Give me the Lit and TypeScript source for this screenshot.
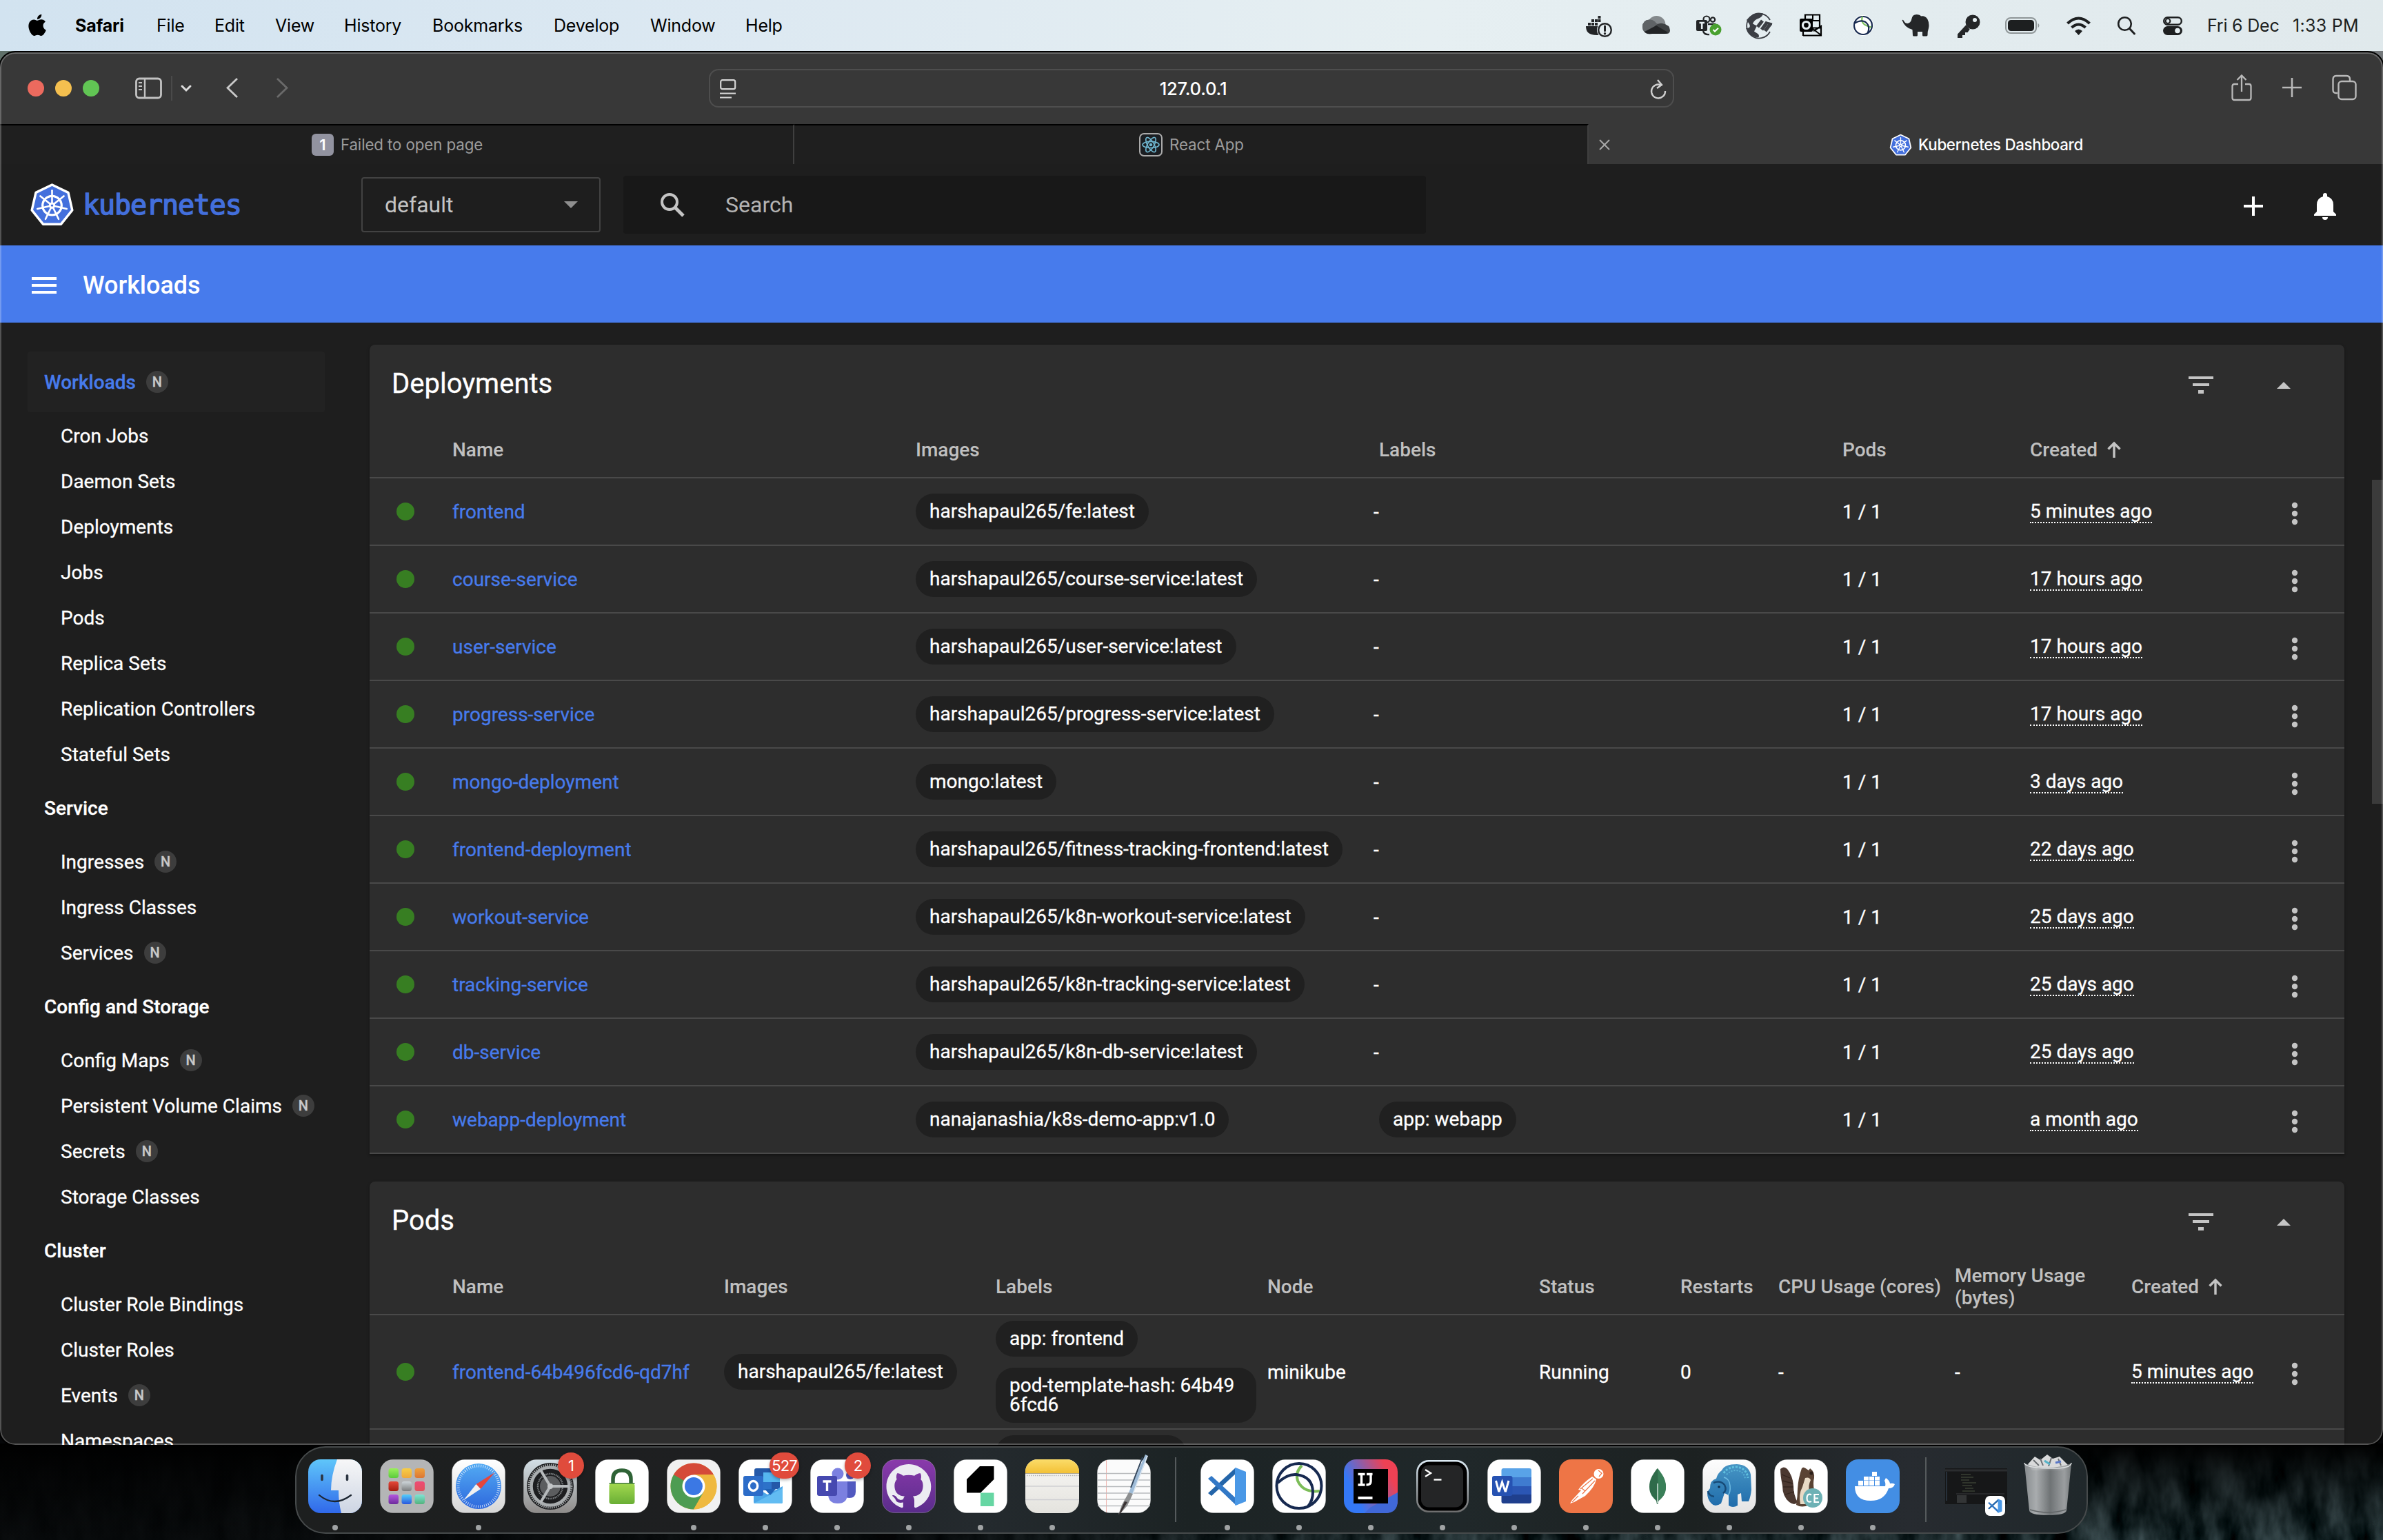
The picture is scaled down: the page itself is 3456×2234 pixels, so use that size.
import { LitElement, html, svg, css, nothing } from "lit";
import { customElement } from "lit/decorators.js";

const frame = (w: number, h: number, body: unknown, cls = "") =>
  html`<svg class=${cls} width=${w} height=${h} viewBox="0 0 ${w} ${h}" fill="none">${body}</svg>`;

/* ---------- Kubernetes helm ---------- */
const polar = (r: number, deg: number) => {
  const a = (deg * Math.PI) / 180;
  return `${(32 + r * Math.cos(a)).toFixed(2)},${(32.6 + r * Math.sin(a)).toFixed(2)}`;
};
const sides = [0, 1, 2, 3, 4, 5, 6].map((i) => -90 + (i * 360) / 7);
const helm = (size: number) => html`<svg width=${size} height=${size} viewBox="0 0 64 64" fill="none">
  <polygon points=${sides.map((d) => polar(29.6, d)).join(" ")} fill="#436fdc" stroke="#fff" stroke-width="3.4" stroke-linejoin="round" />
  <circle cx="32" cy="32.6" r="13.6" stroke="#fff" stroke-width="3.2" />
  ${sides.map((d) => svg`<polyline points="${polar(4, d)} ${polar(21.5, d)}" stroke="#fff" stroke-width="2.6" stroke-linecap="round" />`)}
  <circle cx="32" cy="32.6" r="4.6" fill="#fff" /><circle cx="32" cy="32.6" r="1.7" fill="#436fdc" />
</svg>`;

/* ---------- Menu bar ---------- */
const apple = html`<svg class="apple" width="27" height="32" viewBox="4 1.5 16.5 20.5"><path fill="#000" d="M18.71 19.5c-.83 1.24-1.71 2.45-3.05 2.47-1.34.03-1.77-.79-3.29-.79-1.53 0-2 .77-3.27.82-1.31.05-2.3-1.32-3.14-2.53C4.25 17 2.94 12.45 4.7 9.39c.87-1.52 2.43-2.48 4.12-2.51 1.28-.02 2.5.87 3.29.87.78 0 2.26-1.07 3.81-.91.65.03 2.47.26 3.64 1.98-.09.06-2.17 1.28-2.15 3.81.03 3.02 2.65 4.03 2.68 4.04-.03.07-.42 1.44-1.38 2.83M13 3.5c.73-.83 1.94-1.46 2.94-1.5.13 1.17-.34 2.35-1.04 3.19-.69.85-1.83 1.51-2.95 1.42-.15-1.15.41-2.35 1.05-3.11z"/></svg>`;

const statusIcons = [
  frame(40, 54, svg`<path d="M0 28h26v12q-4 1-10 1C4 41 0 36 0 28z" fill="#222426"/><g fill="#222426"><rect x="3" y="23" width="4" height="4"/><rect x="8" y="23" width="4" height="4"/><rect x="13" y="23" width="4" height="4"/><rect x="8" y="18" width="4" height="4"/><rect x="13" y="18" width="4" height="4"/><rect x="17.500" y="18" width="4" height="4"/><rect x="17.500" y="13" width="4" height="4"/></g><circle cx="27.500" cy="33.500" r="11.500" fill="#e5eef1"/><circle cx="27.500" cy="33.500" r="9.300" stroke="#222426" stroke-width="2.400"/><path d="M27.500 28v6.500" stroke="#222426" stroke-width="3" stroke-linecap="round"/><circle cx="27.500" cy="38.800" r="1.700" fill="#222426"/>`),
  frame(40, 54, svg`<circle cx="20.500" cy="26" r="13" fill="#84898c"/><circle cx="10.500" cy="29" r="10.500" fill="#62666a"/><path d="M10 18.500q6 0 10 5l8 4.500-20 11q-8-2-8-10 0-10 10-10.500z" fill="#5f6366"/><path d="M19 27q5-4 10-3 11 2 11 10 0 5-5 5H10z" fill="#3e4143"/><path d="M3 36l17-9 17 10q-2 2-5 2H10q-5 0-7-3z" fill="#222426"/>`),
  frame(40, 54, svg`<circle cx="15" cy="18" r="4.500" stroke="#222426" stroke-width="2.200"/><circle cx="24" cy="18.500" r="3.200" stroke="#222426" stroke-width="2.200"/><path d="M17 25h10v8M10 35q2 6 9 5" stroke="#222426" stroke-width="2.400"/><rect x="0" y="19" width="16" height="16" rx="2" fill="#222426"/><path d="M4.500 23h7.500M8.200 23v9" stroke="#e5eef1" stroke-width="2.600"/><circle cx="28" cy="33" r="8.500" fill="#48a02f"/><path d="M24.500 33l2.500 2.500 5-4.800" stroke="#fff" stroke-width="2"/>`),
  frame(44, 54, svg`<path d="M37 19A18 18 0 1 0 37 36" stroke="#3b3e44" stroke-width="1.800"/><path d="M3 19Q12 7 27 9.500q-1 5-6 7-7 2-9 8l6 3-4 8 6 4q2 3 0 5Q8 44 2 31q8 0 5-6-2-3-4-6z" fill="#3b3e44"/><path d="M19 29l7-9M25 33l8-11M30 35l8-11" stroke="#3b3e44" stroke-width="5"/><path d="M32 23l8 2" stroke="#3b3e44" stroke-width="3"/>`),
  frame(34, 54, svg`<path d="M8 11.500h21v19H8zM5 42V30M5 41.500h26V28l-11 7" stroke="#000" stroke-width="2.200"/><path d="M8 20h21M19 12v8M18 31l13 10" stroke="#000" stroke-width="2"/><rect x="0" y="17" width="19" height="19" rx="2" fill="#000"/><circle cx="9.500" cy="26.500" r="5" stroke="#e5eef1" stroke-width="3.200"/>`),
  frame(32, 54, svg`<circle cx="15" cy="27" r="15" fill="#fff"/><circle cx="15" cy="27" r="13" stroke="#172a50" stroke-width="2.200"/><path d="M14 14q-4 12 13 15.500" stroke="#7cc05a" stroke-width="2.200"/><path d="M2 24q14-8 20 2 3 6-1 13" stroke="#172a50" stroke-width="2.200"/>`),
  frame(42, 54, svg`<path d="M.5 19q1.500-1 3 2 1.500 3 5 3 5-1 6-7 1-6 7-6 5 0 6.500 2.500 6-1 9.500 4.500 3 6 1.500 13-1.500 4-1.500 10 0 1.500-2 1.500h-4q-1.500 0-1.500-1.500V36h-7v5q0 1.500-1.500 1.500h-4q-1.500 0-1.500-1.500l-.5-8Q4 30 .5 19z" fill="#242628"/>`),
  frame(34, 54, svg`<path d="M14 27L2 40v4h5v-4h4v-4h4l3-4" fill="#242628" stroke="#242628" stroke-width="2"/><circle cx="23" cy="22" r="10.500" fill="#242628"/><circle cx="26" cy="19" r="3" fill="#e5eef1"/>`),
  frame(54, 54, svg`<rect x="1" y="16" width="44" height="22" rx="7" stroke="#8f9698" stroke-width="2"/><rect x="4" y="19" width="38" height="16" rx="4.500" fill="#1d1f20"/><path d="M47.500 23.500q4 3.500 0 7z" fill="#8f9698"/>`),
  frame(36, 54, svg`<g stroke="#1d1f20" stroke-width="4"><path d="M1.500 24q16-15 32 0"/><path d="M7.500 30q10-9 20 0"/></g><path d="M12 35q5.500-5 11 0l-5.500 6z" fill="#1d1f20"/>`),
  frame(28, 54, svg`<circle cx="10.500" cy="24.500" r="9.300" stroke="#1d1f20" stroke-width="2.600"/><path d="M17.500 31.500l7 7.500" stroke="#1d1f20" stroke-width="3" stroke-linecap="round"/>`),
  frame(30, 54, svg`<rect x="1.200" y="15.200" width="25.600" height="10.600" rx="5.300" stroke="#1d1f20" stroke-width="2.400"/><circle cx="7" cy="20.500" r="3.400" stroke="#1d1f20" stroke-width="2"/><rect x="0" y="28" width="28" height="13" rx="6.500" fill="#1d1f20"/><circle cx="21" cy="34.500" r="3.800" fill="#e5eef1"/>`),
];

const menus = ["Safari", "File", "Edit", "View", "History", "Bookmarks", "Develop", "Window", "Help"];

/* ---------- Data ---------- */
const nav: [string, [string, boolean][]][] = [
  ["Workloads", [["Cron Jobs", false], ["Daemon Sets", false], ["Deployments", false], ["Jobs", false], ["Pods", false], ["Replica Sets", false], ["Replication Controllers", false], ["Stateful Sets", false]]],
  ["Service", [["Ingresses", true], ["Ingress Classes", false], ["Services", true]]],
  ["Config and Storage", [["Config Maps", true], ["Persistent Volume Claims", true], ["Secrets", true], ["Storage Classes", false]]],
  ["Cluster", [["Cluster Role Bindings", false], ["Cluster Roles", false], ["Events", true], ["Namespaces", false]]],
];

const deployments: [string, string, string, string][] = [
  ["frontend", "harshapaul265/fe:latest", "", "5 minutes ago"],
  ["course-service", "harshapaul265/course-service:latest", "", "17 hours ago"],
  ["user-service", "harshapaul265/user-service:latest", "", "17 hours ago"],
  ["progress-service", "harshapaul265/progress-service:latest", "", "17 hours ago"],
  ["mongo-deployment", "mongo:latest", "", "3 days ago"],
  ["frontend-deployment", "harshapaul265/fitness-tracking-frontend:latest", "", "22 days ago"],
  ["workout-service", "harshapaul265/k8n-workout-service:latest", "", "25 days ago"],
  ["tracking-service", "harshapaul265/k8n-tracking-service:latest", "", "25 days ago"],
  ["db-service", "harshapaul265/k8n-db-service:latest", "", "25 days ago"],
  ["webapp-deployment", "nanajanashia/k8s-demo-app:v1.0", "app: webapp", "a month ago"],
];

/* ---------- Dock artwork, each on a 78 × 78 tile ---------- */
const tile = (fill: string) => svg`<rect x="0.500" y="0.500" width="77" height="77" rx="18" fill=${fill} stroke="#fff" stroke-opacity=".25"/>`;
const grad = (id: string, a: string, b: string) => svg`<linearGradient id=${id} x1="0" y1="0" x2="0" y2="1"><stop stop-color=${a}/><stop offset="1" stop-color=${b}/></linearGradient>`;
const launch = [["#9cf05c", "#5bcb3c"], ["#f7ce46", "#eea93a"], ["#eea23c", "#dc7634"], ["#e5483a", "#a31d12"], ["#ced6da", "#7b7d7e"], ["#ee4a76", "#e0525b"], ["#b459e0", "#6d2b9c"], ["#56d0fb", "#2a56dd"], ["#7fe4d6", "#53b27c"]];

const finder = svg`${grad("fi", "#5fc6fa", "#3068ea")}${grad("fw", "#f7f7f8", "#cdd5e3")}<clipPath id="fc"><rect width="78" height="78" rx="18"/></clipPath><g clip-path="url(#fc)"><rect width="78" height="78" fill="url(#fi)"/><path d="M42 0Q33 24 33 45h11q0 18 4 33h30V0z" fill="url(#fw)"/><path d="M20 23.500v6M56.500 23.500v6" stroke="#2b3440" stroke-width="3.600" stroke-linecap="round"/><path d="M16 52q22 18 46 0" stroke="#1b2530" stroke-width="2.200" stroke-linecap="round"/></g>`;
const launchpad = svg`${tile("#b4b5b6")}${launch.map(([a, b], i) => svg`${grad("lp" + i, a, b)}<rect x=${12.5 + (i % 3) * 19} y=${13 + Math.floor(i / 3) * 19} width="14.500" height="14" rx="3.500" fill="url(#lp${i})"/>`)}`;
const safari = svg`${grad("sa", "#ffffff", "#d6d6d6")}${grad("sb", "#52aaf3", "#2e68dd")}${tile("url(#sa)")}<circle cx="39" cy="39" r="33" fill="url(#sb)"/><circle cx="39" cy="39" r="29.500" stroke="#fff" stroke-opacity=".8" stroke-width="4" stroke-dasharray=".9 2.190"/><path d="M62.500 19L42 43l-6.500-7z" fill="#e5463c"/><path d="M17 59.500L35.500 36l6.500 7z" fill="#f1f1f1"/>`;
const settings = svg`${grad("se", "#d3dfe6", "#8f8c8a")}${tile("url(#se)")}<circle cx="39" cy="39" r="34" fill="#1d1e20"/><circle cx="39" cy="39" r="31" stroke="#a2a6a8" stroke-width="3" stroke-dasharray="1.500 1.500"/><circle cx="39" cy="39" r="27.500" stroke="#a9adaf" stroke-width="4.500"/><circle cx="39" cy="39" r="18" stroke="#7d8183" stroke-width="2.500" stroke-dasharray="1.500 1"/><circle cx="39" cy="39" r="15" fill="#5b5d5f"/><path d="M39 39h27M39 39L25 15.500M39 39L25 62.500" stroke="#b6babc" stroke-width="4"/><circle cx="39" cy="39" r="4" fill="#c3c6c8"/>`;
const lock = svg`${grad("lo", "#a3d94f", "#69ae35")}${tile("#fff")}<path d="M26 37V28.500q0-12.500 13-12.500t13 12.500V37" stroke="#2f6336" stroke-width="5.500"/><rect x="20.500" y="34.500" width="37" height="30.500" rx="4" fill="url(#lo)"/><path d="M20.500 35h37" stroke="#417a34" stroke-width="1.500"/>`;
const chrome = svg`${tile("#f1f1f1")}<circle cx="39" cy="39" r="33.500" fill="#e9b63c"/><path d="M10 22.200A33.500 33.500 0 0 1 68 22.200H39L24.500 47.400z" fill="#d54a39"/><path d="M10 22.200A33.500 33.500 0 0 0 39 72.500L53.500 47.400 39 39z" fill="#4d9c52"/><path d="M39 22.200h29A33.500 33.500 0 0 1 39 72.500l14.500-25.100z" fill="#efb93f"/><circle cx="39" cy="39" r="16.500" fill="#fff"/><circle cx="39" cy="39" r="13" fill="#3b78e4"/>`;
const outlook = svg`${tile("#fff")}<rect x="23" y="13" width="37" height="30" rx="3" fill="#2458a8"/><path d="M36 19h24v14H36z" fill="#56b7ef"/><path d="M36 33h12v12H36z" fill="#2d72c9"/><path d="M22 39l20 12 22-12v23q0 2-2 2H24q-2 0-2-2z" fill="#4ba6e8"/><path d="M22 64L64 42v20q0 2-2 2z" fill="#62bcf2"/><path d="M38 43h16l-8 9z" fill="#1f62b5"/><rect x="7" y="24" width="29" height="29" rx="3" fill="#2c6cc8"/><ellipse cx="21.500" cy="38.500" rx="6.200" ry="7" stroke="#fff" stroke-width="3.400"/>`;
const teams = svg`${tile("#fff")}<circle cx="40" cy="21" r="8.500" fill="#7b80e0"/><circle cx="58" cy="23" r="6" fill="#4f55bd"/><path d="M48 32h18v15q0 9-9 9-6 0-9-4z" fill="#5159c0"/><path d="M26 32h28v18q0 14-14 14T26 50z" fill="#7b80e0"/><rect x="10" y="24" width="29" height="29" rx="3" fill="#4649b0"/><path d="M18.500 32h12M24.500 32v14" stroke="#fff" stroke-width="3.400"/>`;
const github = svg`${grad("gh", "#8a3aab", "#5a2c8c")}${tile("url(#gh)")}<g transform="translate(6.500 7) scale(4.050)"><path fill="#ececf2" d="M8 0C3.580 0 0 3.580 0 8c0 3.540 2.290 6.530 5.470 7.590.4.070.55-.17.55-.38 0-.19-.01-.82-.01-1.490-2.010.37-2.530-.49-2.690-.94-.09-.23-.48-.94-.82-1.130-.28-.15-.68-.52-.01-.53.63-.01 1.080.58 1.230.82.72 1.210 1.870.87 2.330.66.07-.52.28-.87.51-1.070-1.780-.2-3.640-.89-3.640-3.950 0-.87.31-1.590.82-2.150-.08-.2-.36-1.020.08-2.120 0 0 .67-.21 2.200.82.64-.18 1.320-.27 2-.27.68 0 1.360.09 2 .27 1.530-1.040 2.200-.82 2.200-.82.44 1.100.16 1.920.08 2.120.51.56.82 1.270.82 2.150 0 3.070-1.870 3.750-3.650 3.950.29.25.54.73.54 1.480 0 1.070-.01 1.930-.01 2.200 0 .21.15.46.55.38A8.013 8.013 0 0016 8c0-4.420-3.580-8-8-8z"/></g>`;
const greenApp = svg`${tile("#fff")}<path d="M38 10h20.500v19L39 48.500H19V29z" fill="#000"/><path d="M39 48.500h19.500V68H39z" fill="#66d6a3"/>`;
const notes = svg`${grad("no", "#fbdc6a", "#f3c136")}${grad("np", "#f8f7f5", "#e4e3de")}<clipPath id="nc"><rect width="78" height="78" rx="18"/></clipPath><g clip-path="url(#nc)"><rect width="78" height="78" fill="url(#np)"/><rect width="78" height="20" fill="url(#no)"/><path d="M0 20.500h78" stroke="#b0a890"/><path d="M2 23.500h76" stroke="#b5b5b2" stroke-width="1.500" stroke-dasharray="1.500 1.500"/><path d="M0 39h78M0 58.500h78" stroke="#cfcfd2" stroke-width="1.300"/></g>`;
const textedit = svg`${tile("#fbfbfb")}<path d="M13.500 1v76" stroke="#f0b5b0"/><path d="M1 20.500h76M1 30h76M1 39.500h76M1 49h76M1 58h76M1 67.500h76" stroke="#b9bcbe" stroke-width="1.300"/><path d="M70 -7l4 2-22 55-6-2z" fill="#9fbcd8"/><path d="M66-3L49 41" stroke="#33465c" stroke-width="2"/><path d="M73-5L52 50" stroke="#dfe9f2" stroke-width="1.500"/><path d="M46 48l6 2-8 17-7 8-6 5 5-14z" fill="#8d8f90" /><path d="M40 61l4 1-9 15-4 4z" fill="#3a3334"/>`;
const vscode = (s = 1) => svg`<g transform="scale(${s})"><path d="M11 49l5 4 36-33-1-8z" fill="#2465a9"/><path d="M11 28l5-4 36 33-1 9z" fill="#3278c6"/><path d="M51 12l15 6v43l-15 6-1-1V13z" fill="#4a98e6"/></g>`;
const vscodeTile = svg`${tile("#fff")}${vscode()}`;
const ringApp = svg`${tile("#fff")}<path d="M43 9q-10 10-6 22 8 18 32 15" stroke="#7cbd58" stroke-width="4"/><circle cx="39" cy="38.500" r="32.500" stroke="#172a50" stroke-width="4"/><path d="M8 34q14-13 27-12 24 3 24 26 0 12-7 20" stroke="#172a50" stroke-width="4"/>`;
const intellij = svg`<linearGradient id="ij" x1="0" y1=".6" x2=".9" y2=".15"><stop offset=".15" stop-color="#3478f6"/><stop offset=".9" stop-color="#ef4154"/></linearGradient><rect width="78" height="78" rx="18" fill="url(#ij)"/><path d="M38 70L78 48v12q0 18-18 18H30z" fill="#4068d8"/><rect x="14" y="14" width="50" height="50" fill="#000"/><path d="M20.500 21.500h10M25.500 21.500v15M20.500 37h10M33 21.500h8.500M39 21v11q0 5-6.500 5" stroke="#fff" stroke-width="3.400"/><path d="M20.500 56h21" stroke="#fff" stroke-width="4"/>`;
const terminal = svg`${grad("te", "#dcebf5", "#6d6d6d")}<rect x="1" y="1" width="76" height="76" rx="18" fill="url(#te)"/><rect x="3.500" y="3.500" width="71" height="71" rx="16" fill="#000"/><rect x="8" y="8.500" width="61" height="61" rx="11" fill="#242526"/><path d="M14 15l8 5-8 5" stroke="#fff" stroke-width="2.400"/><path d="M26.500 29.500h11" stroke="#fff" stroke-width="2.400"/>`;
const word = svg`${tile("#fff")}<clipPath id="wc"><rect x="20.500" y="13" width="43.500" height="51" rx="3"/></clipPath><g clip-path="url(#wc)"><path d="M20 13h44v13H20z" fill="#59a3e8"/><path d="M20 26h44v13H20z" fill="#3f7bd0"/><path d="M20 39h44v12H20z" fill="#2b56b4"/><path d="M20 51h44v13H20z" fill="#1f3f8d"/></g><rect x="7" y="24" width="29.500" height="29" rx="3" fill="#2652b2"/><path d="M12.500 31l4 15h.8L21.500 33l4.400 13h.8L31 31" stroke="#fff" stroke-width="3"/>`;
const postman = svg`<rect width="78" height="78" rx="18" fill="#ee7546"/><circle cx="57.500" cy="21" r="7" fill="#fff"/><path d="M57 16l5 4-4 5" stroke="#ee7546" stroke-width="1.300"/><path d="M48 25l6 4q-2 11-16 24L22 62l-6 2 3-5 13-14-4-1q7-10 20-19z" fill="#fff"/><path d="M49 28L31 43M52 31L34 50M33 42l5 4M28 53l-9 9" stroke="#ee7546" stroke-width="1.200"/>`;
const mongo = svg`${tile("#fff")}<path d="M38.500 13C32 22 27 29 27 40c0 11 6 16 10 20l1 5h1.500l1-5C46 56 51 50 51 40c0-11-6-18-12.500-27z" fill="#2f6b4a"/><path d="M39 13c7 9 12 16 12 27s-6 16-11 20z" fill="#3a7f58"/><path d="M39 35v29" stroke="#c9ddd2" stroke-width="1.600"/>`;
const pgadmin = svg`${grad("pg", "#fdfdfd", "#e4e4e4")}${grad("ph", "#4795c4", "#1f6cab")}${tile("url(#pg)")}<path d="M28 16q4-9 22-9 17 1 20 15l1 22q-1 10-4 17h-10l-1-12-5 2 0 16q-7 4-13 0l0-15-6-3-5 15q-9 6-14 0-6-6-6-15 1-4 4-7 0-12 9-14 2-8 8-12z" fill="url(#ph)"/><path d="M31 20q5-9 19-9 14 2 16 16" stroke="#5fc0de" stroke-width="3" stroke-dasharray="3 2"/><path d="M35 22q6-6 14-6 11 1 13 12" stroke="#5ab2d6" stroke-width="2" stroke-dasharray="2 2"/><path d="M16 34q10-4 16 3 4 8-2 12M8 46q1 7 9 8" stroke="#174a77" stroke-width="2.500"/><path d="M31 26q8 2 9 12t-3 14" stroke="#6fbbe2" stroke-width="1.500"/><circle cx="24" cy="40" r="1.800" fill="#0e2c4a"/>`;
const dbeaver = svg`${tile("#fff")}<path d="M9 14q5-5 10 0 8 10 9 24 0 14 6 24-4 6-12 0-10-8-10-24-3-14-3-24z" fill="#4b3830"/><path d="M11 22l12 5M12 31l15 4M13 40l15 0M16 51l13-4" stroke="#34251f" stroke-width="1.300"/><path d="M40 13q5-5 12 0 7 5 6 14-2 8 0 17 1 14-7 22-11 5-19 0 2-12 2-23 1-16 6-30z" fill="#5a4334"/><path d="M45 27q6-2 8 3-4 8-2 16 1 12-5 19h-8q-3-14 3-25z" fill="#e8dac5"/><path d="M41 11q7-4 12 1l-3 4q-5-4-9-5z" fill="#fff"/><circle cx="54" cy="20" r="2.600" fill="#2b1e18"/><circle cx="56" cy="56" r="14" fill="#6db1b5"/><path d="M54 51.500q-6-3-6.500 4.500 0 7.500 6.500 5M65 51h-6.500v11H65M58.500 56.500H64" stroke="#fff" stroke-width="2.200"/>`;
const docker = svg`<rect width="78" height="78" rx="18" fill="#438ee4"/><path d="M13 39h44q1-5-1-8l2-4q5 3 6 8 4-1 7 1-2 6-9 6-6 18-26 18-23 0-23-21z" fill="#fff"/><g fill="#fff"><rect x="18" y="31" width="7" height="7"/><rect x="26" y="31" width="7" height="7"/><rect x="34" y="31" width="7" height="7"/><rect x="42" y="31" width="7" height="7"/><rect x="26" y="25" width="7" height="5.500"/><rect x="34" y="25" width="7" height="5.500"/><rect x="42" y="25" width="7" height="5.500"/><rect x="38" y="18" width="7" height="6"/></g>`;

type App = [unknown, boolean, string?];
const appsLeft: App[] = [[finder, true], [launchpad, false], [safari, true], [settings, false, "1"], [lock, false], [chrome, true], [outlook, true, "527"], [teams, true, "2"], [github, true], [greenApp, true], [notes, true], [textedit, false]];
const appsRight: App[] = [[vscodeTile, true], [ringApp, true], [intellij, true], [terminal, true], [word, true], [postman, true], [mongo, true], [pgadmin, true], [dbeaver, true], [docker, true]];

const appIcon = ([art, open, badge]: App) => html`<div class="app">
  ${frame(78, 78, art, "art")}${badge ? html`<span class="count">${badge}</span>` : nothing}
  ${open ? html`<i class="dot"></i>` : nothing}
</div>`;

const minimized = frame(92, 92, svg`<rect x="1" y="13" width="90" height="52" fill="#161718"/><path d="M1 16h90" stroke="#2b2d2f" stroke-width="3"/><path d="M3 18v42" stroke="#26303a" stroke-width="2"/><g stroke="#4a5440" stroke-width="1"><path d="M24 22h14M24 26h18M24 30h12M26 34h20M26 38h14M30 42h12M26 46h18"/></g><path d="M17 50h70" stroke="#3b3d3f"/><rect x="18" y="52" width="14" height="11" fill="#333536"/><rect x="59" y="53" width="29" height="29" rx="7" fill="#fff"/><g transform="translate(59 53)">${vscode(0.37)}</g>`);
const trash = frame(70, 92, svg`<linearGradient id="tr" x1="0" x2="1"><stop stop-color="#8f9396"/><stop offset=".25" stop-color="#b3b6b8"/><stop offset=".55" stop-color="#75797b"/><stop offset=".85" stop-color="#a4a7a9"/><stop offset="1" stop-color="#7c8082"/></linearGradient><path d="M6 14L16 3l8 5L34 0l8 6 10-3 12 12-8 8H12z" fill="#d9dadb"/><path d="M14 8l8 8M24 6l4 10M40 5l-4 12M50 6l4 10" stroke="#6b6f73" stroke-width="2"/><path d="M30 9l8 5" stroke="#55b3c8" stroke-width="3"/><path d="M46 12l8-2" stroke="#5a78c8" stroke-width="3"/><path d="M1 13q34 12 68 0l-7 68q-1 7-27 7t-27-7z" fill="url(#tr)" fill-opacity=".93"/><path d="M1 12q0 7 34 8t34-8" stroke="#dfe2e4" stroke-width="1.500"/><path d="M9 80q26 8 52 0" stroke="#606466" stroke-width="1.500"/>`);

/* Rocky texture of the wallpaper strip under the window: one noise channel tinted teal. */
const wallpaper = html`<svg class="rock" width="3456" height="140" viewBox="0 0 3456 140">
  <filter id="rock" x="0" y="0" width="1" height="1" color-interpolation-filters="sRGB"><feTurbulence type="fractalNoise" baseFrequency=".03 .012" numOctaves="4" seed="7"/>
    <feColorMatrix values=".55 0 0 0 -.15  .6 0 0 0 -.11  .62 0 0 0 -.11  0 0 0 0 1"/></filter>
  <linearGradient id="dim"><stop offset="0" stop-color="#050607" stop-opacity=".92"/><stop offset=".38" stop-color="#050607" stop-opacity=".85"/><stop offset=".6" stop-color="#050607" stop-opacity=".2"/><stop offset="1" stop-color="#050607" stop-opacity=".1"/></linearGradient>
  <linearGradient id="shade" x2="0" y2="1"><stop stop-color="#000"/><stop offset=".3" stop-color="#000" stop-opacity=".6"/><stop offset="1" stop-color="#000" stop-opacity="0"/></linearGradient>
  <rect width="3456" height="140" filter="url(#rock)"/><rect width="3456" height="140" fill="url(#dim)"/><rect width="3456" height="140" fill="url(#shade)"/>
</svg>`;

@customElement("age-cell")
export class AgeCell extends LitElement {
  static properties = { age: { attribute: false } };
  declare age: string;
  static styles = css`
    :host { display: block; }
    .text { display: block; height: 30px; margin-top: 2px; line-height: 29px; border-bottom: 2px dotted #fff; }
  `;
  render() {
    return html`<span class="text">${this.age}</span>`;
  }
}

@customElement("app-root")
export class AppRoot extends LitElement {
  static styles = css`
    :host { display: block; width: 3456px; height: 2234px; overflow: hidden; }
    * { box-sizing: border-box; }
    svg { display: block; flex: none; overflow: visible; }
    .desktop { position: relative; width: 3456px; height: 2234px; display: flex; flex-direction: column; font-family: Roboto, "Liberation Sans", sans-serif; font-size: 28px; color: #fff;
      background: linear-gradient(90deg, #5f7069, #73777a) 0 0 / 100% 400px no-repeat, #050608; }
    .rock { position: absolute; left: 0; bottom: 0; overflow: hidden; }
    .menubar { height: 74px; flex: none; display: flex; justify-content: space-between; align-items: center; padding: 0 34px 0 41px; background: linear-gradient(90deg, #d2e3f0, #dde9f2 32%, #e6eff2 60%, #e0e9ec); color: #000; font: 400 25px/74px Inter, "Liberation Sans", sans-serif; letter-spacing: -.2px; white-space: nowrap; }
    .menus { display: grid; grid-template-columns: 68px 118px 84px 88px 100px 128px 176px 140px 138px 90px; align-items: center; }
    .apple { margin-top: -3px; }
    .front { font-weight: 700; }
    .status { display: grid; grid-template-columns: 82px 78px 70px 80px 77px 71px 80px 70px 89px 74px 66px 64px 124px 97px; align-items: center; color: #1d1f20; }
    .status svg { margin-top: -1px; }
    .time { letter-spacing: .3px; }

    .window { position: relative; flex: none; margin-top: 2px; height: 2020px; border-radius: 22px; overflow: hidden; background: #1e1e1e; display: flex; flex-direction: column; outline: 2px solid #000; }
    .window::after { content: ""; position: absolute; inset: 0; border-radius: 22px; border: 2px solid rgba(255, 255, 255, .24); }
    .toolbar { height: 104px; flex: none; background: #383838; display: grid; grid-template-columns: 990px 1400px 1fr; padding: 0 0 0 38px; align-items: center; }
    .left { display: flex; align-items: center; }
    .light { width: 24px; height: 24px; border-radius: 50%; margin-right: 16px; }
    .lights { display: flex; padding-left: 2px; width: 158px; }
    .red { background: #ec6a5e; } .amber { background: #f4bf4f; } .green { background: #61c554; }
    .address { height: 56px; border: 2px solid #4e4e4e; border-radius: 14px; display: flex; align-items: center; justify-content: space-between; padding: 1px 9px 0 14px; font: 500 25.500px/52px Inter, sans-serif; letter-spacing: -.2px; }
    .tools { display: flex; justify-content: flex-end; gap: 44px; padding-right: 38px; align-items: center; }
    .tabs { height: 57px; flex: none; display: grid; grid-template-columns: 1152px 1152px 1fr; font: 400 22.300px/56px Inter, sans-serif; color: #9c9c9c; border-bottom: 2px solid #000; }
    .tab { display: flex; align-items: center; justify-content: center; gap: 10px; padding-left: 2px; background: #1f1f1f; border-top: 2px solid #000; border-right: 2px solid #3f3f3f; letter-spacing: -.1px; }
    .tab.active { background: #383838; border: 0; color: #fff; display: grid; grid-template-columns: 16px 1fr; padding: 2px 0 0 15px; font-weight: 500; gap: 0; }
    .tab.active .caption { display: flex; align-items: center; justify-content: center; gap: 9px; padding-right: 30px; letter-spacing: -.3px; }
    .one { width: 32px; height: 32px; border-radius: 6px; background: #9293a0; color: #fff; font: 600 22px/32px Inter, sans-serif; text-align: center; }

    .brandbar { height: 119px; flex: none; display: flex; align-items: center; padding: 1px 68px 0 43px; }
    .brand { display: flex; align-items: center; gap: 12px; width: 481px; color: #436fdc; font: 400 40px/60px "DejaVu Sans Mono", monospace; letter-spacing: -1.100px; -webkit-text-stroke: 1.500px #436fdc; }
    .select { width: 347px; height: 80px; border: 2px solid #424242; border-radius: 4px; display: flex; align-items: center; justify-content: space-between; padding: 0 31px 0 32px; color: #c4c4c4; font-size: 32px; }
    .search { margin-left: 33px; width: 1164px; height: 84px; background: #181818; border-radius: 4px; display: flex; align-items: center; gap: 59px; padding-left: 54px; font-size: 32px; color: #b4b4b4; }
    .actions { margin-left: auto; display: flex; gap: 74px; align-items: center; padding-top: 3px; }
    .titlebar { height: 112px; flex: none; background: #477bec; display: flex; align-items: center; gap: 38px; padding: 4px 0 0 46px; font-size: 36px; font-weight: 500; letter-spacing: -.05px; }

    .main { flex: 1; min-height: 0; display: grid; grid-template-columns: 536px 2864px 1fr; overflow: hidden; -webkit-text-stroke: .3px currentColor; }
    .side { padding: 41px 65px 0 40px; }
    .group { height: 90px; padding-left: 24px; display: flex; align-items: center; gap: 15px; font-weight: 500; border: 0 solid transparent; border-width: 1px 0; background-clip: padding-box; }
    .group.current { background-color: #222; color: #477bec; border-radius: 4px; }
    .item { height: 66px; padding-left: 48px; display: flex; align-items: center; gap: 15px; white-space: nowrap; }
    .n { width: 32px; height: 32px; border-radius: 50%; background: #3d3d3d; color: #c9c9c9; font: 500 20px/32px Roboto, sans-serif; text-align: center; }
    .cards { padding-top: 32px; display: flex; flex-direction: column; gap: 40px; }
    .card { background: #2d2d2d; border-radius: 8px 8px 0 0; flex: none; box-shadow: 0 2px 4px rgba(0, 0, 0, .4); }
    .head { height: 112px; padding: 0 78px 0 32px; display: flex; align-items: center; justify-content: space-between; font-size: 40px; }
    .headicons { display: flex; align-items: center; gap: 92px; padding-top: 6px; }
    .row { display: grid; align-items: center; border-bottom: 2px solid #494949; height: 98px; padding-left: 39px; }
    .dep .row { grid-template-columns: 81px 672px 672px 672px 272px 1fr; }
    .pod .row { grid-template-columns: 81px 394px 394px 394px 394px 205px 142px 256px 256px 1fr; }
    .row.th { height: 82px; padding-top: 1px; color: #c0c0c0; font-weight: 500; line-height: 32px; -webkit-text-stroke: 0; }
    .pod .row.tall { height: 166px; }
    .pod .row.next { align-items: start; padding-top: 8px; }
    .name { color: #477bec; }
    .ball { width: 26px; height: 26px; border-radius: 50%; background: #377e22; }
    .chip { display: inline-block; background: #202020; border-radius: 26px; padding: 12px 20px; line-height: 28px; vertical-align: top; white-space: nowrap; }
    .chip.wrap { white-space: normal; word-break: break-all; width: 378px; }
    .chip.stub { width: 276px; height: 52px; justify-self: start; }
    .chips { display: flex; flex-direction: column; align-items: flex-start; gap: 16px; }
    .dash { margin-left: -8px; }
    .sorted { display: flex; align-items: center; gap: 14px; }
    .agecell { display: flex; align-items: center; justify-content: space-between; }
    .kebab { margin: 6px 68px 0 0; }
    .rail { padding: 228px 0 0 40px; }
    .thumb { height: 470px; background: #3b3b3b; }

    .dock { align-self: center; margin-top: 2px; width: 2600px; height: 127px; border: 2px solid #464a4b; border-radius: 44px; background: linear-gradient(90deg, #1d1f1f, #1e1f21 25%, #242a2e 38%, #1c2324 50%, #20282a 65%, #1c2121 78%, #272b30 90%, #20282b); display: flex; gap: 26px; padding: 17px 22px 0 17px; position: relative; z-index: 1; }
    .app { width: 78px; position: relative; display: flex; flex-direction: column; align-items: center; gap: 17px; }
    .dot { width: 8px; height: 8px; border-radius: 50%; background: #a0a3a4; }
    .count { position: absolute; right: -10px; top: -10px; min-width: 38px; height: 38px; padding: 0 3px; border-radius: 19px; background: #e04b3c; font: 400 22px/38px Inter, sans-serif; text-align: center; letter-spacing: -.8px; box-shadow: 0 2px 4px rgba(0, 0, 0, .3); }
    .sep { width: 2px; height: 94px; background: #555a5c; margin: -3px 9px 0 9px; flex: none; }
    .sep.last { margin: -3px 0 0 11px; }
    .trash { margin: -7px 0 0 -3px; }
  `;

  private head(title: string) {
    return html`<div class="head"><span>${title}</span><span class="headicons">
      ${frame(36, 26, svg`<path d="M0 0h36v4H0zM6 10h24v4H6zM14 20h8v5h-8z" fill="#c4c4c4"/>`)}
      ${frame(20, 10, svg`<path d="M10 0l10 10H0z" fill="#c4c4c4"/>`)}
    </span></div>`;
  }

  private created() {
    return html`<span class="sorted">Created ${frame(20, 24, svg`<path d="M10 23V2M1.500 10.500L10 2l8.500 8.500" stroke="#c4c4c4" stroke-width="3.400"/>`)}</span>`;
  }

  private age(age: string) {
    return html`<div class="agecell"><age-cell .age=${age}></age-cell>${frame(8, 32, svg`<g fill="#c4c4c4"><circle cx="4" cy="4" r="4.200"/><circle cx="4" cy="16" r="4.200"/><circle cx="4" cy="28" r="4.200"/></g>`, "kebab")}</div>`;
  }

  render() {
    return html`<div class="desktop">
      ${wallpaper}
      <div class="menubar">
        <div class="menus">${apple}${menus.map((m, i) => html`<span class=${i ? "" : "front"}>${m}</span>`)}</div>
        <div class="status">${statusIcons}<span>Fri 6 Dec</span><span class="time">1:33 PM</span></div>
      </div>

      <div class="window">
        <div class="toolbar">
          <div class="left">
            <div class="lights"><i class="light red"></i><i class="light amber"></i><i class="light green"></i></div>
            ${frame(280, 40, svg`<rect x="1.500" y="6" width="36" height="28" rx="4.500" stroke="#c2c2c2" stroke-width="2.800"/><path d="M14 6v28" stroke="#c2c2c2" stroke-width="2.400"/><path d="M5 12h5M5 17h5M5 22h5" stroke="#c2c2c2" stroke-width="1.800"/><path d="M53 2v36" stroke="#4a4a4a" stroke-width="2"/><path d="M68 17l6 6 6-6" stroke="#dcdcdc" stroke-width="3" stroke-linecap="round"/><path d="M148 6l-14 13.500L148 33" stroke="#c9c9c9" stroke-width="2.800"/><path d="M206 6l14 13.500L206 33" stroke="#6a6a6a" stroke-width="2.800"/>`)}
          </div>
          <div class="address">
            ${frame(24, 28, svg`<rect x="1.200" y="1.200" width="21" height="13" rx="2.500" stroke="#d5d5d5" stroke-width="2.200"/><path d="M0 20.500h23M0 26.500h17" stroke="#d5d5d5" stroke-width="2.200"/>`)}
            <span>127.0.0.1</span>
            ${frame(24, 30, svg`<path d="M16 9.300A10 10 0 1 0 22 18" stroke="#d0d0d0" stroke-width="2.400"/><path d="M11 2l6 7-7 5" stroke="#d0d0d0" stroke-width="2.400"/>`)}
          </div>
          <div class="tools">
            ${frame(30, 40, svg`<path d="M10 14H4.500Q1.500 14 1.500 17v17q0 3 3 3h21q3 0 3-3V17q0-3-3-3H20M15 25V2M8.500 8L15 1.500 21.500 8" stroke="#b9b9b9" stroke-width="2.300"/>`)}
            ${frame(28, 40, svg`<path d="M14 5v28M0 19h28" stroke="#b9b9b9" stroke-width="2.600"/>`)}
            ${frame(36, 40, svg`<path d="M8 27H6q-4.500 0-4.500-4.500V7Q1.500 2 6 2h15q5 0 5 5v3" stroke="#b9b9b9" stroke-width="2.400"/><rect x="9.500" y="10" width="25" height="26" rx="4.500" stroke="#b9b9b9" stroke-width="2.400"/>`)}
          </div>
        </div>
        <div class="tabs">
          <div class="tab"><span class="one">1</span><span>Failed to open page</span></div>
          <div class="tab">${frame(34, 34, svg`<rect x="1" y="1" width="32" height="32" rx="6" fill="#1b1e22" stroke="#aaa" stroke-width="2"/><g stroke="#6fb6cf" stroke-width="1.600"><ellipse cx="17" cy="17" rx="12" ry="4.600"/><ellipse cx="17" cy="17" rx="12" ry="4.600" transform="rotate(60 17 17)"/><ellipse cx="17" cy="17" rx="12" ry="4.600" transform="rotate(120 17 17)"/></g><circle cx="17" cy="17" r="2.300" fill="#6fb6cf"/>`)}<span>React App</span></div>
          <div class="tab active">${frame(16, 16, svg`<path d="M1 1l14 14M15 1L1 15" stroke="#a8a8a8" stroke-width="2"/>`)}<span class="caption">${helm(33)}<span>Kubernetes Dashboard</span></span></div>
        </div>

        <div class="brandbar">
          <div class="brand">${helm(65)}<span>kubernetes</span></div>
          <div class="select"><span>default</span>${frame(20, 10, svg`<path d="M0 0h20L10 10z" fill="#8f8f8f"/>`)}</div>
          <div class="search">${frame(35, 35, svg`<circle cx="13" cy="13" r="11" stroke="#c4c4c4" stroke-width="4"/><path d="M21 21l12 12" stroke="#c4c4c4" stroke-width="5"/>`)}<span>Search</span></div>
          <div class="actions">
            ${frame(28, 28, svg`<path d="M14 0v28M0 14h28" stroke="#fff" stroke-width="4"/>`)}
            ${frame(32, 40, svg`<path d="M16 40q4 0 4-4h-8q0 4 4 4zM28 28V18q0-9.500-9-12V4q0-3-3-3t-3 3v2Q4 8.500 4 18v10l-4 4v2h32v-2z" fill="#fff"/>`)}
          </div>
        </div>
        <div class="titlebar">${frame(36, 24, svg`<path d="M0 2h36M0 12h36M0 22h36" stroke="#fff" stroke-width="4"/>`)}<span>Workloads</span></div>

        <div class="main">
          <nav class="side">${nav.map(([g, items], i) => html`
            <div class="group ${i ? "" : "current"}"><span>${g}</span>${i ? nothing : html`<span class="n">N</span>`}</div>
            ${items.map(([t, n]) => html`<div class="item"><span>${t}</span>${n ? html`<span class="n">N</span>` : nothing}</div>`)}`)}
          </nav>
          <div class="cards">
            <section class="card dep">
              ${this.head("Deployments")}
              <div class="row th"><span></span><span>Name</span><span>Images</span><span>Labels</span><span>Pods</span>${this.created()}</div>
              ${deployments.map(([name, image, label, age]) => html`<div class="row">
                <i class="ball"></i><span class="name">${name}</span><span><span class="chip">${image}</span></span>
                <span>${label ? html`<span class="chip">${label}</span>` : html`<span class="dash">-</span>`}</span>
                <span>1 / 1</span>${this.age(age)}</div>`)}
            </section>
            <section class="card pod">
              ${this.head("Pods")}
              <div class="row th"><span></span><span>Name</span><span>Images</span><span>Labels</span><span>Node</span><span>Status</span><span>Restarts</span><span>CPU Usage (cores)</span><span>Memory Usage<br>(bytes)</span>${this.created()}</div>
              <div class="row tall">
                <i class="ball"></i><span class="name">frontend-64b496fcd6-qd7hf</span><span><span class="chip">harshapaul265/fe:latest</span></span>
                <div class="chips"><span class="chip">app: frontend</span><span class="chip wrap">pod-template-hash: 64b496fcd6</span></div>
                <span>minikube</span><span>Running</span><span>0</span><span>-</span><span>-</span>
                ${this.age("5 minutes ago")}
              </div>
              <div class="row tall next"><span></span><span></span><span></span><span class="chip stub"></span></div>
            </section>
          </div>
          <div class="rail"><div class="thumb"></div></div>
        </div>
      </div>

      <div class="dock">
        ${appsLeft.map(appIcon)}<i class="sep"></i>${appsRight.map(appIcon)}<i class="sep last"></i>
        ${minimized}<div class="trash">${trash}</div>
      </div>
    </div>`;
  }
}
